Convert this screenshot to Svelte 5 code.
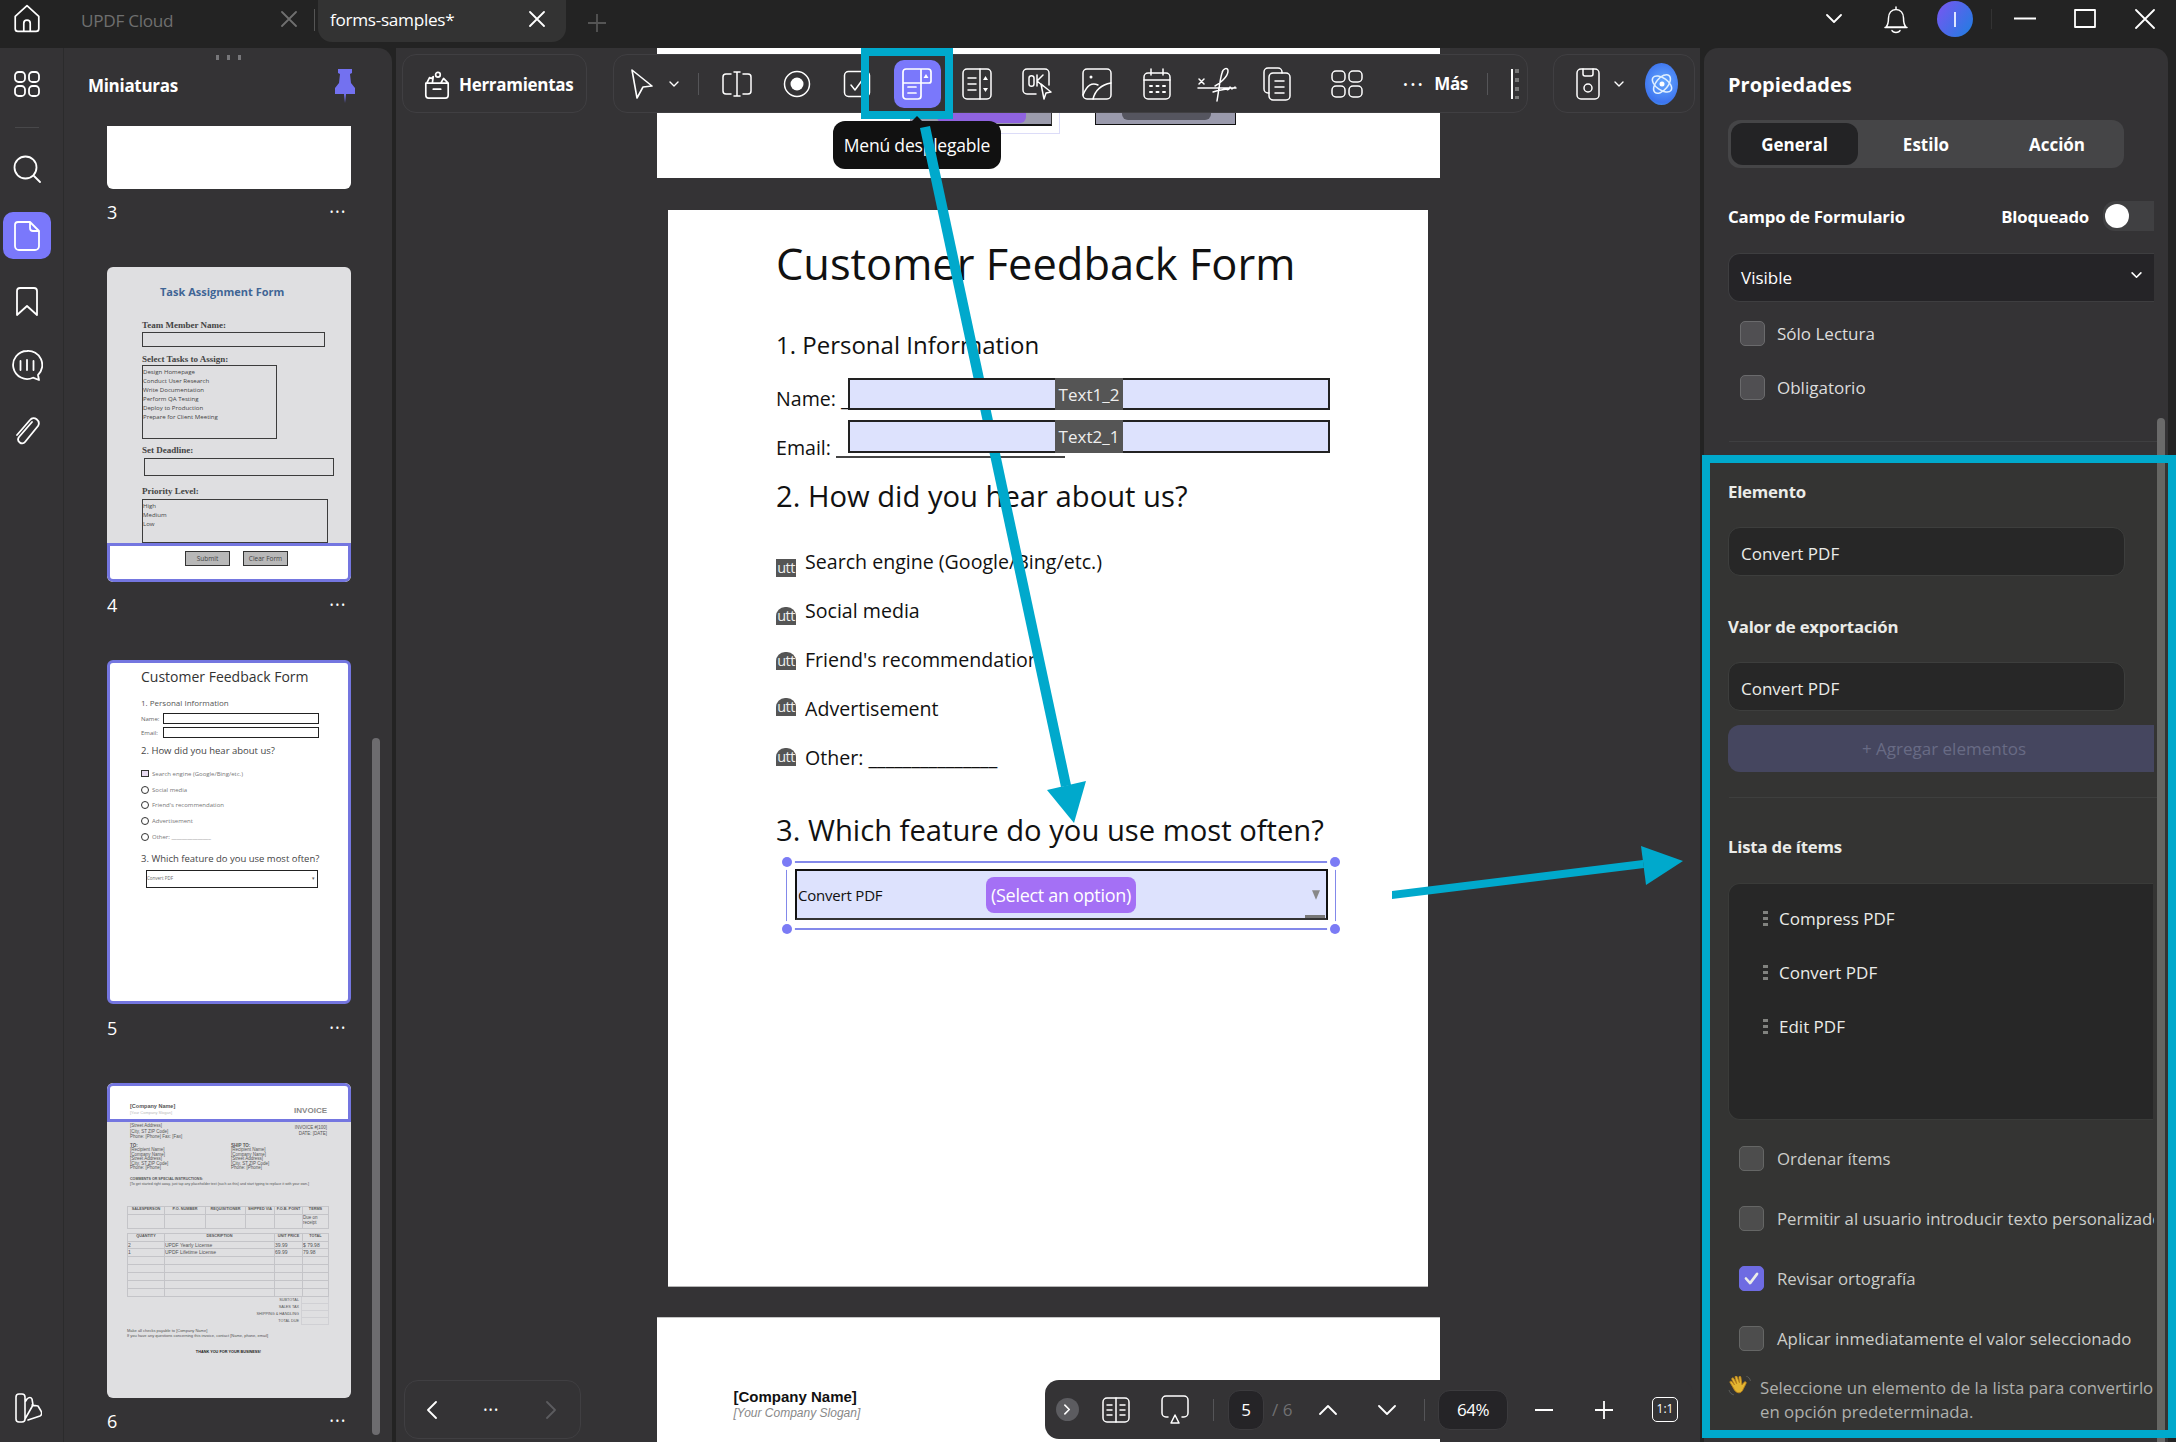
<script>
	const tasks = ['Design Homepage', 'Conduct User Research', 'Write Documentation', 'Perform QA Testing', 'Deploy to Production', 'Prepare for Client Meeting'];
	const priorities = ['High', 'Medium', 'Low'];
	const options = [
		{ text: 'Search engine (Google/Bing/etc.)', off: 6, round: false },
		{ text: 'Social media', off: 5, round: true },
		{ text: "Friend's recommendation", off: 1, round: true },
		{ text: 'Advertisement', off: -2, round: true },
		{ text: 'Other: _______________', off: -1, round: true }
	];
	const items = ['Compress PDF', 'Convert PDF', 'Edit PDF'];
	const lower = [
		{ text: 'Ordenar ítems', on: false },
		{ text: 'Permitir al usuario introducir texto personalizado', on: false },
		{ text: 'Revisar ortografía', on: true },
		{ text: 'Aplicar inmediatamente el valor seleccionado', on: false }
	];
	const invoiceHead = ['SALESPERSON', 'P.O. NUMBER', 'REQUISITIONER', 'SHIPPED VIA', 'F.O.B. POINT', 'TERMS'];
	const invoiceRows = [
		['2', 'UPDF Yearly License', '39.99', '$ 79.98'],
		['1', 'UPDF Lifetime License', '69.99', '79.98'],
		['', '', '', ''], ['', '', '', ''], ['', '', '', ''], ['', '', '', ''], ['', '', '', '']
	];
	const totals = ['SUBTOTAL', 'SALES TAX', 'SHIPPING & HANDLING', 'TOTAL DUE'];
</script>

<div class="app">
	<!-- barra de pestañas -->
	<header class="topbar">
		<svg class="home" viewBox="0 0 28 28" width="30" height="30"><path d="M3 12.5 14 2.5l11 10V24a2.5 2.5 0 0 1-2.5 2.5h-17A2.5 2.5 0 0 1 3 24zM11 26.500V19a3 3 0 0 1 6 0v7.500" /></svg>
		<div class="tab off">
			<span>UPDF Cloud</span>
			<svg viewBox="0 0 16 16" width="16" height="16"><path d="m1 1 14 14M15 1 1 15" /></svg>
		</div>
		<i class="tabsep"></i>
		<div class="tab on">
			<span>forms-samples*</span>
			<svg viewBox="0 0 16 16" width="16" height="16"><path d="m1 1 14 14M15 1 1 15" /></svg>
		</div>
		<svg class="plus" viewBox="0 0 18 18" width="18" height="18"><path d="M9 0v18M0 9h18" /></svg>

		<div class="winbtns">
			<svg viewBox="0 0 16 10" width="16" height="10"><path d="m1 1 7 7 7-7" /></svg>
			<svg class="bell" viewBox="0 0 24 30" width="24" height="30"><path d="M2 23c2-2 2.500-4 2.500-9 0-5 3-8.500 7.500-8.500s7.500 3.500 7.500 8.500c0 5 .5 7 2.500 9zM1 23.500h22M8 26.500c1 2.500 7 2.500 8 0M12 5.500V3" /></svg>
			<div class="avatar"><i></i></div>
			<i class="winsep"></i>
			<svg viewBox="0 0 22 4" width="22" height="4"><path d="M0 1.500h22" /></svg>
			<svg viewBox="0 0 22 20" width="22" height="20"><rect x="1" y="1" width="20" height="17" /></svg>
			<svg viewBox="0 0 20 20" width="20" height="20"><path d="m1 1 18 18M19 1 1 19" /></svg>
		</div>
	</header>

	<div class="body">
		<!-- barra lateral -->
		<nav class="rail">
			<svg viewBox="0 0 26 26" width="26" height="26" style="margin-top:23px"><rect x="1" y="1" width="10" height="10" rx="3.500" /><rect x="15" y="1" width="10" height="10" rx="3.500" /><rect x="1" y="15" width="10" height="10" rx="3.500" /><rect x="15" y="15" width="10" height="10" rx="3.500" /></svg>
			<i class="railsep"></i>
			<svg viewBox="0 0 28 28" width="28" height="28" style="margin-top:27px"><circle cx="12.500" cy="12.500" r="11" /><path d="m21 21 6 6" /></svg>
			<div class="railbtn">
				<svg viewBox="0 0 26 30" width="26" height="30"><path d="M4 1h12l9 9v15a4 4 0 0 1-4 4H5a4 4 0 0 1-4-4V4a3 3 0 0 1 3-3zM16 1v6a3 3 0 0 0 3 3h6" /></svg>
			</div>
			<svg viewBox="0 0 24 30" width="24" height="30" style="margin-top:28px"><path d="M5 1h14a3 3 0 0 1 3 3v24l-10-9-10 9V4a3 3 0 0 1 3-3z" /></svg>
			<svg viewBox="0 0 32 32" width="32" height="32" style="margin-top:33px"><path d="M16 1a14 14 0 1 0 6 26.700l6 2.300-1-5A14 14 0 0 0 16 1zM9.500 11v9M16 10v10M22.500 11v9" /></svg>
			<svg viewBox="0 0 28 32" width="28" height="32" style="margin-top:34px"><path d="M19 6 6 21c-3 4 3 9 6 5L25 10c3-5-4-11-8-6L4 19" /></svg>
			<svg class="skin" viewBox="0 0 28 30" width="28" height="30"><path d="M2 4a3 3 0 0 1 3-3h3a3 3 0 0 1 3 3v22a3 3 0 0 1-3 3H5a3 3 0 0 1-3-3zM11 9l2-3c2-2 4-2 5 0l1 6-8 14M14 27l12-4c2-1 2-3 1-5l-3-5-6-1" /></svg>
		</nav>

		<!-- miniaturas -->
		<aside class="thumbs">
			<div class="grip"><i></i><i></i><i></i></div>
			<div class="thumbhead">
				<span>Miniaturas</span>
				<svg viewBox="0 0 20 34" width="20" height="34"><path d="M3 0h14v4l-2 1 1 9 4 5v6H11l-1 9-1-9H0v-6l4-5 1-9-2-1z" /></svg>
			</div>

			<div class="thumblist">
				<div class="thumb t3"></div>
				<div class="thumbfoot"><span>3</span><b>•••</b></div>

				<div class="thumb t4">
					<div class="t4title">Task Assignment Form</div>
					<div class="t4label" style="margin-top:20px">Team Member Name:</div>
					<div class="t4box" style="width:183px;height:15px;margin-top:1px"></div>
					<div class="t4label" style="margin-top:7px">Select Tasks to Assign:</div>
					<div class="t4box t4list" style="width:135px;height:74px">
						{#each tasks as t}<div>{t}</div>{/each}
					</div>
					<div class="t4label" style="margin-top:6px">Set Deadline:</div>
					<div class="t4box" style="width:190px;height:18px;margin:2px 0 0 2px"></div>
					<div class="t4label" style="margin-top:10px">Priority Level:</div>
					<div class="t4box t4list" style="width:186px;height:44px;margin-top:2px">
						{#each priorities as t}<div>{t}</div>{/each}
					</div>
					<div class="t4strip">
						<span>Submit</span>
						<span>Clear Form</span>
					</div>
				</div>
				<div class="thumbfoot"><span>4</span><b>•••</b></div>

				<div class="thumb t5">
					<div class="t5h1">Customer Feedback Form</div>
					<div class="t5h3">1. Personal Information</div>
					<div class="t5row" style="margin-top:4px"><span>Name:</span><i></i></div>
					<div class="t5row" style="margin-top:3px"><span>Email:</span><i></i></div>
					<div class="t5h2" style="margin-top:5px">2. How did you hear about us?</div>
					<div class="t5opts">
						{#each options as o}
							<div><i class:round={o.round}></i>{o.text}</div>
						{/each}
					</div>
					<div class="t5h2" style="margin-top:7px">3. Which feature do you use most often?</div>
					<div class="t5sel">Convert PDF<b>▾</b></div>
				</div>
				<div class="thumbfoot f5"><span>5</span><b>•••</b></div>

				<div class="thumb t6">
					<div class="t6strip">
						<div class="t6co"><b>[Company Name]</b><small>[Your Company Slogan]</small></div>
						<div class="t6inv">INVOICE</div>
					</div>
					<div class="t6body">
						<div class="t6top">
							<div>[Street Address]<br />[City, ST ZIP Code]<br />Phone: [Phone]  Fax: [Fax]</div>
							<div class="r">INVOICE #[100]<br />DATE: [DATE]</div>
						</div>
						<div class="t6addr">
							<div><b>TO:</b><br />[Recipient Name]<br />[Company Name]<br />[Street Address]<br />[City, ST ZIP Code]<br />Phone: [Phone]</div>
							<div><b>SHIP TO:</b><br />[Recipient Name]<br />[Company Name]<br />[Street Address]<br />[City, ST ZIP Code]<br />Phone: [Phone]</div>
						</div>
						<div class="t6com"><b>COMMENTS OR SPECIAL INSTRUCTIONS:</b><br />[To get started right away, just tap any placeholder text (such as this) and start typing to replace it with your own.]</div>
						<div class="t6tab1">
							{#each invoiceHead as h}<b>{h}</b>{/each}
							{#each invoiceHead as h, i}<span>{i === 5 ? 'Due on receipt' : ''}</span>{/each}
						</div>
						<div class="t6tab2">
							<b>QUANTITY</b><b>DESCRIPTION</b><b>UNIT PRICE</b><b>TOTAL</b>
							{#each invoiceRows as r}
								{#each r as c}<span>{c}</span>{/each}
							{/each}
						</div>
						<div class="t6tot">
							{#each totals as t}<div><span>{t}</span><i></i></div>{/each}
						</div>
						<div class="t6note">Make all checks payable to [Company Name]<br />If you have any questions concerning this invoice, contact [Name, phone, email]</div>
						<div class="t6thx">THANK YOU FOR YOUR BUSINESS!</div>
					</div>
				</div>
				<div class="thumbfoot"><span>6</span><b>•••</b></div>
			</div>
			<i class="thumbscroll"></i>
		</aside>

		<!-- documento -->
		<main class="canvas">
			<section class="page pg1">
				<div class="frag a"><div class="purple"></div></div>
				<div class="frag b"><div class="darkbit"></div></div>
			</section>

			<section class="page pg2">
				<h1>Customer Feedback Form</h1>
				<h3>1. Personal Information</h3>
				<div class="frow r1">
					<span class="flabel">Name: _</span>
					<div class="field"><span class="ftag">Text1_2</span></div>
				</div>
				<div class="frow r2">
					<span class="flabel">Email:</span>
					<div class="field"><span class="ftag">Text2_1</span></div>
					<i class="uline"></i>
				</div>
				<h2 class="q2">2. How did you hear about us?</h2>
				<div class="opts">
					{#each options as o}
						<div class="opt">
							<span class="btnmark" class:round={o.round} style="top:{o.off}px">utt</span>
							<span>{o.text}</span>
						</div>
					{/each}
				</div>
				<h2 class="q3">3. Which feature do you use most often?</h2>
				<div class="selection">
					<i class="hd tl"></i><i class="hd tr"></i><i class="hd bl"></i><i class="hd br"></i>
					<div class="dropfield">
						<span class="dv">Convert PDF</span>
						<span class="badge">(Select an option)</span>
						<svg viewBox="0 0 10 12" width="8" height="10"><path d="M0 0h10L5 12z" /></svg>
						<i class="grab"></i>
					</div>
				</div>
			</section>

			<section class="page pg3">
				<div class="coname">[Company Name]</div>
				<div class="coslogan">[Your Company Slogan]</div>
			</section>

			<!-- barras flotantes -->
			<div class="floatbar herr">
				<svg viewBox="0 0 30 30" width="30" height="30"><path d="M3 13h24v13a3 3 0 0 1-3 3H6a3 3 0 0 1-3-3zM11 19.500h8M4 13 7 7l2 1 2-2-1 7M19 13l3-5 5 5" /><circle cx="16" cy="4" r="2.500" /></svg>
				<span>Herramientas</span>
			</div>

			<div class="floatbar tools">
				<svg class="w30" viewBox="0 0 24 30" width="24" height="30"><path d="M2 1 22 17l-9 1-6 11z" /></svg>
				<svg class="chev" viewBox="0 0 10 6" width="10" height="6"><path d="m1 1 4 4 4-4" /></svg>
				<i class="tsep s1"></i>
				<div class="toolrow">
					<div class="tool"><svg viewBox="0 0 32 26" width="32" height="26"><path d="M10 3H5a3 3 0 0 0-3 3v14a3 3 0 0 0 3 3h5M22 3h5a3 3 0 0 1 3 3v14a3 3 0 0 1-3 3h-5M13 1h6M16 1v24M13 25h6" /></svg></div>
					<div class="tool"><svg viewBox="0 0 28 28" width="28" height="28"><circle cx="14" cy="14" r="12.500" /><circle class="solid" cx="14" cy="14" r="6.500" /></svg></div>
					<div class="tool"><svg viewBox="0 0 28 28" width="28" height="28"><rect x="1.500" y="1.500" width="25" height="25" rx="4" /><path d="m8 15 4 5 8-11" /></svg></div>
					<div class="tool act"><svg viewBox="0 0 30 32" width="30" height="32"><path d="M4 1h22a3 3 0 0 1 3 3v9a2 2 0 0 1-2 2H19v13a3 3 0 0 1-3 3H4a3 3 0 0 1-3-3V4a3 3 0 0 1 3-3zM1 15h18M19 1v14M6 19h8M6 25h8" /><path class="solid" d="m24 6 2.500 4h-5z" /></svg></div>
					<div class="tool"><svg viewBox="0 0 30 32" width="30" height="32"><rect x="1" y="1" width="28" height="30" rx="4" /><path d="M18 1v30M6 10h8M6 16h8M6 22h8" /><path class="solid" d="m23.500 8 2.500 4h-5zM23.500 24 21 20h5z" /></svg></div>
					<div class="tool"><svg viewBox="0 0 32 34" width="32" height="34"><path d="M15 27H6a4 4 0 0 1-4-4V6a4 4 0 0 1 4-4h18a4 4 0 0 1 4 4v12" /><path d="M8 11v6c0 3 5 3 5 0v-6c0-3-5-3-5 0zM16 8v11M22 8l-6 6 6 5" /><path d="m20 17 10 8-5 1-2 6z" /></svg></div>
					<div class="tool"><svg viewBox="0 0 30 32" width="30" height="32"><rect x="1" y="1" width="28" height="30" rx="4" /><path d="M1 27c4-10 9-13 15-10M11 31c2-8 7-14 18-16" /><circle class="solid" cx="9" cy="9" r="1.500" /></svg></div>
					<div class="tool"><svg viewBox="0 0 30 32" width="30" height="32"><rect x="2" y="5" width="26" height="26" rx="4" /><path d="M2 12h26M9 1v6M21 1v6" /><path class="dash" d="M8 18h15M8 24h15" /></svg></div>
					<div class="tool"><svg viewBox="0 0 40 36" width="40" height="36"><path d="M1 22h38M2 13l5 5M7 13l-5 5M20 35c2-12 3-22 5-28 1-5 6-6 6-2 0 6-9 13-13 15M16 26c5-2 9-2 14-3 0 2 3 0 3-2l2 2 3-2" /></svg></div>
					<div class="tool"><svg viewBox="0 0 28 34" width="28" height="34"><path d="M6 26H5a4 4 0 0 1-4-4V5a4 4 0 0 1 4-4h10a4 4 0 0 1 4 4v1" /><rect x="6" y="6" width="21" height="27" rx="4" /><path d="M12 14h9M12 20h9M12 26h9" /></svg></div>
				</div>
				<svg class="gridic" viewBox="0 0 32 28" width="32" height="28"><rect x="1" y="1" width="13" height="11" rx="4" /><rect x="18" y="1" width="13" height="11" rx="4" /><rect x="1" y="16" width="13" height="11" rx="4" /><rect x="18" y="16" width="13" height="11" rx="4" /></svg>
				<b class="moredots">•••</b>
				<span class="more">Más</span>
				<i class="tsep s2"></i>
				<i class="cutbar"></i>
			</div>

			<div class="floatbar side">
				<svg viewBox="0 0 24 32" width="24" height="32"><rect x="1" y="1" width="22" height="30" rx="4" /><path d="M7 1v5a2 2 0 0 0 2 2h6a2 2 0 0 0 2-2V1" /><circle cx="12" cy="20" r="4" /></svg>
				<svg class="chev" viewBox="0 0 10 6" width="10" height="6"><path d="m1 1 4 4 4-4" /></svg>
				<div class="ai">
					<svg viewBox="0 0 30 30" width="30" height="30"><ellipse cx="15" cy="15" rx="11" ry="6" transform="rotate(35 15 15)" /><ellipse cx="15" cy="15" rx="11" ry="6" transform="rotate(-50 15 15)" /><circle class="solid" cx="15" cy="15" r="2.500" /></svg>
				</div>
			</div>

			<div class="floatbar prevnext">
				<svg viewBox="0 0 10 18" width="10" height="18"><path d="M9 1 1 9l8 8" /></svg>
				<b>•••</b>
				<svg class="dim" viewBox="0 0 10 18" width="10" height="18"><path d="m1 1 8 8-8 8" /></svg>
			</div>

			<div class="floatbar pager">
				<div class="collapse"><svg viewBox="0 0 8 12" width="7" height="11"><path d="m1 1 5 5-5 5" /></svg></div>
				<svg class="pb book" viewBox="0 0 28 26" width="28" height="26"><rect x="1" y="1" width="26" height="24" rx="4" /><path d="M14 1v24M5 8h5M5 13h5M5 18h5M18 8h5M18 13h5M18 18h5" /></svg>
				<svg class="pb present" viewBox="0 0 30 30" width="30" height="30"><path d="M8 22H6a4 4 0 0 1-4-4V5a4 4 0 0 1 4-4h18a4 4 0 0 1 4 4v13a4 4 0 0 1-4 4h-2" /><path d="m15 20 4 8h-8z" /></svg>
				<i class="tsep p1"></i>
				<div class="pageno">5</div>
				<span class="pagetot">/ 6</span>
				<svg class="pb up" viewBox="0 0 18 10" width="18" height="10"><path d="m1 9 8-8 8 8" /></svg>
				<svg class="pb down" viewBox="0 0 18 10" width="18" height="10"><path d="m1 1 8 8 8-8" /></svg>
				<i class="tsep p2"></i>
				<div class="zoomval">64%</div>
				<svg class="pb minus" viewBox="0 0 18 2" width="18" height="2"><path d="M0 1h18" /></svg>
				<svg class="pb plusic" viewBox="0 0 18 18" width="18" height="18"><path d="M9 0v18M0 9h18" /></svg>
				<div class="oneone">1:1</div>
			</div>
		</main>

		<!-- propiedades -->
		<aside class="props">
			<h4 class="ptitle">Propiedades</h4>
			<div class="ptabs">
				<span class="sel">General</span>
				<span class="es">Estilo</span>
				<span class="ac">Acción</span>
			</div>

			<div class="prow">
				<b>Campo de Formulario</b>
				<b class="blk">Bloqueado</b>
				<div class="toggle"><i></i></div>
			</div>
			<div class="pselect">
				<span>Visible</span>
				<svg viewBox="0 0 12 8" width="11" height="7"><path d="m1 1 5 5 5-5" /></svg>
			</div>
			<label class="chk first"><i></i>Sólo Lectura</label>
			<label class="chk second"><i></i>Obligatorio</label>
			<hr class="d1" />

			<div class="plabel l1">Elemento</div>
			<div class="pinput">Convert PDF</div>
			<div class="plabel l2">Valor de exportación</div>
			<div class="pinput">Convert PDF</div>
			<div class="addbtn">+ Agregar elementos</div>
			<hr class="d2" />

			<div class="plabel l3">Lista de ítems</div>
			<div class="itemlist">
				{#each items as it}
					<div class="itm"><i class="dots"><u></u><u></u><u></u></i>{it}</div>
				{/each}
			</div>
			<div class="lower">
				{#each lower as c}
					<label class="chk" class:on={c.on}>
						<i>{#if c.on}<svg viewBox="0 0 16 14" width="15" height="13"><path d="m2 7 4.500 5L14 2" /></svg>{/if}</i>{c.text}
					</label>
				{/each}
			</div>
			<div class="note">
				<svg viewBox="0 0 22 22" width="24" height="24"><path d="M5 13 2 8c-1-1 .5-2 1.500-1L6 10 3.500 5C3 3.800 4.500 3 5.200 4L8 9 6.500 3c-.3-1.300 1.300-1.700 1.800-.5L10.500 8l-.5-5c0-1.300 1.700-1.300 1.800 0l1 7 2-2.500c1-1 2.500 0 1.700 1.300l-2.500 5C12 19 7 18 5 13z" /><path class="lines" d="M17 2c1.500.5 3 2 3.500 4M1 15c.5 2 2 3.500 4 4" /></svg>
				<span>Seleccione un elemento de la lista para convertirlo<br />en opción predeterminada.</span>
			</div>
			<i class="propscroll"></i>
		</aside>
	</div>

	<!-- anotaciones -->
	<div class="mark markone"></div>
	<div class="tooltip">Menú desplegable</div>
	<div class="mark marktwo"></div>
	<svg class="arrows" viewBox="0 0 2176 1442" width="2176" height="1442">
		<polygon points="920,128 930,126 1071,785 1061,787" />
		<polygon points="1074,823 1047,790 1086,781" />
		<polygon points="1392,891 1643,860 1644,868 1392,899" />
		<polygon points="1683,861 1641,846 1646,885" />
	</svg>
</div>

<style>
	:global(body) {
		margin: 0;
		background: #232323;
	}

	.app {
		width: 2176px;
		height: 1442px;
		position: relative;
		overflow: hidden;
		background: #232323;
		color: #fff;
		font-family: "Open Sans", "Noto Sans", sans-serif;
		display: flex;
		flex-direction: column;
	}

	svg {
		fill: none;
		stroke: #fff;
		stroke-width: 1.8;
		stroke-linecap: round;
		stroke-linejoin: round;
		flex: none;
	}
	svg .solid {
		fill: #fff;
		stroke: none;
	}

	/* barra superior */
	.topbar {
		height: 48px;
		flex: none;
		display: flex;
		align-items: flex-start;
		padding-left: 12px;
		box-sizing: border-box;
	}
	.home {
		margin-top: 3px;
		stroke-width: 1.6;
	}
	.tab {
		display: flex;
		align-items: center;
		justify-content: space-between;
		height: 40px;
		box-sizing: border-box;
		font-size: 17.200px;
		letter-spacing: -0.3px;
	}
	.tab.off {
		width: 211px;
		margin-left: 39px;
		color: #6f6f6f;
	}
	.tab.off svg {
		stroke: #6f6f6f;
		margin-top: -2px;
		margin-right: -5px;
	}
	.tabsep {
		width: 1px;
		height: 22px;
		background: #555;
		margin: 9px 0 0 22px;
	}
	.tab.on {
		width: 248px;
		height: 42px;
		margin-left: 3px;
		padding: 0 21px 0 12px;
		background: #333333;
		border-radius: 0 0 14px 14px;
	}
	.tab.on span {
		margin-top: -3px;
	}
	.tab.on svg {
		margin-top: -4px;
	}
	.plus {
		margin: 14px 0 0 22px;
		stroke: #555;
	}
	.winbtns {
		margin-left: auto;
		display: flex;
		align-items: center;
		height: 38px;
		padding-right: 21px;
	}
	.winbtns .bell {
		margin-left: 42px;
		stroke-width: 1.5;
	}
	.avatar {
		width: 36px;
		height: 36px;
		border-radius: 50%;
		background: linear-gradient(125deg, #7a55f2, #1d7fe0);
		margin-left: 29px;
		display: flex;
		align-items: center;
		justify-content: center;
	}
	.avatar i {
		width: 2px;
		height: 15px;
		background: #dfe6ff;
	}
	.winsep {
		width: 1px;
		height: 20px;
		background: #333;
		margin-left: 18px;
	}
	.winbtns svg:nth-of-type(3) {
		margin-left: 22px;
	}
	.winbtns svg:nth-of-type(4) {
		margin-left: 38px;
	}
	.winbtns svg:nth-of-type(5) {
		margin-left: 39px;
	}

	.body {
		flex: 1;
		display: flex;
		min-height: 0;
	}

	/* barra lateral */
	.rail {
		flex: none;
		background: #343335;
		border-right: 1px solid #2b2b2c;
		display: flex;
		flex-direction: column;
		align-items: center;
		padding-right: 9px;
		box-sizing: border-box;
		width: 64px;
		position: relative;
	}
	.railsep {
		width: 24px;
		height: 1px;
		background: #48484a;
		margin-top: 30px;
	}
	.railbtn {
		width: 48px;
		height: 47px;
		margin-top: 29px;
		background: #7a78fb;
		border-radius: 10px;
		display: flex;
		align-items: center;
		justify-content: center;
	}
	.skin {
		margin-top: auto;
		margin-bottom: 19px;
		margin-left: 2px;
		stroke-width: 1.6;
	}

	/* miniaturas */
	.thumbs {
		width: 328px;
		flex: none;
		background: #343335;
		border-radius: 0 14px 0 0;
		position: relative;
		overflow: hidden;
	}
	.grip {
		display: flex;
		justify-content: center;
		gap: 8px;
		padding-top: 7px;
		height: 5px;
	}
	.grip i {
		width: 3px;
		height: 5px;
		background: #77777a;
	}
	.thumbhead {
		display: flex;
		justify-content: space-between;
		align-items: center;
		margin-top: 7px;
		padding: 0 37px 0 24px;
		height: 36px;
		font-size: 17px;
		font-weight: 700;
		letter-spacing: -0.3px;
	}
	.thumbhead svg {
		fill: #7371f0;
		stroke: none;
		margin-top: 2px;
	}
	.thumblist {
		margin: 23px 0 0 43px;
		width: 244px;
	}
	.thumb {
		width: 244px;
		box-sizing: border-box;
		border-radius: 6px;
		overflow: hidden;
		position: relative;
		color: #333;
	}
	.thumbfoot {
		height: 78px;
		display: flex;
		justify-content: space-between;
		padding: 10px 4px 0 0;
		box-sizing: border-box;
		font-size: 18px;
		line-height: 26px;
	}
	.thumbfoot b {
		font-size: 10px;
		letter-spacing: 2px;
		font-weight: 400;
	}
	.thumbfoot.f5 {
		height: 79px;
		padding-top: 11px;
	}
	.t3 {
		height: 63px;
		background: #fff;
		border-radius: 0 0 6px 6px;
	}
	.t4 {
		height: 315px;
		background: #dfdfe1;
		padding: 17px 0 0 35px;
		font-family: "Liberation Serif", serif;
	}
	.t4title {
		font: 700 11px/16px "Open Sans", sans-serif;
		color: #3f6595;
		margin-left: 18px;
	}
	.t4label {
		font-size: 9px;
		font-weight: 700;
		line-height: 11px;
		color: #444;
	}
	.t4box {
		border: 1.5px solid #3c3c3c;
		box-sizing: border-box;
	}
	.t4list {
		font: 6.100px/9.100px "Open Sans", sans-serif;
		color: #444;
		padding-top: 1px;
	}
	.t4strip {
		position: absolute;
		left: 0;
		right: 0;
		bottom: 0;
		height: 39px;
		box-sizing: border-box;
		background: #fff;
		border: 3px solid #7476e0;
		border-radius: 0 0 6px 6px;
		display: flex;
		justify-content: center;
		gap: 13px;
		padding: 5px 0 0 15px;
		font: 6.500px/13px "Open Sans", sans-serif;
	}
	.t4strip span {
		width: 45px;
		height: 15px;
		text-align: center;
		box-sizing: border-box;
		background: #b8b8b8;
		border: 1px solid #333;
		color: #444;
	}
	.t5 {
		height: 344px;
		background: #fff;
		border: 3px solid #7476e0;
		padding: 4px 0 0 31px;
	}
	.t5h1 {
		font-size: 14px;
		line-height: 20px;
	}
	.t5h3 {
		font-size: 8px;
		line-height: 12px;
		margin-top: 10px;
		color: #555;
	}
	.t5h2 {
		font-size: 9.500px;
		line-height: 15px;
		color: #444;
		white-space: nowrap;
	}
	.t5row {
		display: flex;
		align-items: flex-end;
		height: 11px;
		font-size: 6px;
		line-height: 9px;
		color: #666;
	}
	.t5row span {
		width: 22px;
	}
	.t5row i {
		width: 156px;
		height: 11px;
		box-sizing: border-box;
		border: 1.5px solid #222;
		background: #fff;
	}
	.t5opts {
		margin-top: 8px;
		font-size: 6px;
		color: #777;
	}
	.t5opts div {
		height: 15.700px;
		display: flex;
		align-items: center;
		gap: 3px;
	}
	.t5opts i {
		width: 6px;
		height: 5px;
		border: 1.500px solid #333;
		background: #e9dcf2;
	}
	.t5opts i.round {
		border-radius: 50%;
		background: #fff;
		height: 6px;
	}
	.t5sel {
		margin: 4px 0 0 5px;
		width: 172px;
		height: 18px;
		box-sizing: border-box;
		border: 1.5px solid #222;
		font-size: 4.500px;
		line-height: 15px;
		color: #666;
		display: flex;
		justify-content: space-between;
		padding-right: 2px;
	}
	.t5sel b {
		font-weight: 400;
	}
	.t6 {
		height: 315px;
		background: #dfdfe1;
		font: 4.500px/5.500px "Liberation Sans", sans-serif;
		color: #555;
	}
	.t6strip {
		height: 39px;
		background: #fff;
		box-sizing: border-box;
		border: 3px solid #7476e0;
		border-radius: 6px 6px 0 0;
		display: flex;
		justify-content: space-between;
		padding: 18px 21px 0 20px;
	}
	.t6co b {
		display: block;
		font-size: 5.500px;
	}
	.t6co small {
		font-size: 4px;
		color: #bbb;
	}
	.t6inv {
		font-size: 8px;
		font-weight: 700;
		line-height: 12px;
		color: #888;
		margin-top: 1px;
	}
	.t6body {
		padding: 1px 24px 0 23px;
	}
	.t6top {
		display: flex;
		justify-content: space-between;
	}
	.t6top .r {
		text-align: right;
		margin-top: 2px;
	}
	.t6addr {
		display: grid;
		grid-template-columns: 101px 1fr;
		margin-top: 4px;
		line-height: 4.500px;
	}
	.t6addr div {
		line-height: 4.500px;
	}
	.t6com {
		margin-top: 6px;
		font-size: 3.600px;
		white-space: nowrap;
	}
	.t6tab1,
	.t6tab2 {
		display: grid;
		margin-left: -3px;
		margin-right: -2px;
		border-top: 1px solid #c4c4c8;
		border-left: 1px solid #c4c4c8;
	}
	.t6tab1 {
		margin-top: 18px;
		grid-template-columns: 37px 41px 40px 29px 28px 1fr;
	}
	.t6tab2 {
		margin-top: 4px;
		grid-template-columns: 37px 110px 28px 1fr;
	}
	.t6tab1 b,
	.t6tab2 b {
		font-size: 3.800px;
		text-align: center;
		height: 7px;
	}
	.t6tab1 b,
	.t6tab1 span,
	.t6tab2 b,
	.t6tab2 span {
		border-right: 1px solid #c4c4c8;
		border-bottom: 1px solid #c4c4c8;
		overflow: hidden;
	}
	.t6tab1 span {
		height: 13px;
	}
	.t6tab2 span {
		height: 6.900px;
		line-height: 6px;
		font-size: 5px;
	}
	.t6tot {
		margin: 0 -2px 0 0;
	}
	.t6tot div {
		display: flex;
		justify-content: flex-end;
		gap: 2px;
		height: 7px;
		line-height: 7px;
		font-size: 3.800px;
	}
	.t6tot i {
		width: 26px;
		border: 1px solid #d0d0d4;
		border-top: 0;
	}
	.t6note {
		margin: 3px 0 0 -3px;
		font-size: 4px;
	}
	.t6thx {
		margin-top: 11px;
		text-align: center;
		font-size: 3.800px;
		font-weight: 700;
		color: #222;
	}
	.thumbscroll {
		position: absolute;
		left: 308px;
		top: 690px;
		width: 8px;
		height: 697px;
		border-radius: 4px;
		background: #6d6c6f;
	}

	/* documento */
	.canvas {
		width: 1304px;
		margin-left: 4px;
		flex: none;
		background: #343335;
		position: relative;
		overflow: hidden;
		display: flex;
		flex-direction: column;
		align-items: center;
	}
	.page {
		background: #fff;
		flex: none;
		color: #111;
		box-sizing: border-box;
	}
	.pg1 {
		width: 783px;
		height: 130px;
		display: flex;
		align-items: flex-start;
		padding-top: 30px;
	}
	.frag {
		position: relative;
		box-sizing: border-box;
		flex: none;
	}
	.frag.a {
		width: 156px;
		height: 56px;
		margin-left: 247px;
		border-right: 1px solid #dcdcf8;
		border-bottom: 1px solid #dcdcf8;
		padding-top: 0;
	}
	.frag.a::before {
		content: "";
		position: absolute;
		left: 6px;
		top: 0;
		width: 142px;
		height: 48px;
		background: #9b9bac;
		border-bottom: 2px solid #111;
		border-right: 1px solid #333;
		box-sizing: border-box;
	}
	.purple {
		position: absolute;
		left: 33px;
		top: 0;
		width: 89px;
		height: 45px;
		background: #8f63e0;
		border-radius: 0 0 6px 6px;
	}
	.frag.b {
		width: 141px;
		height: 47px;
		margin-left: 35px;
		background: #9a9aac;
		border: 1.5px solid #111;
		border-top: 0;
	}
	.darkbit {
		position: absolute;
		left: 26px;
		top: 0;
		width: 89px;
		height: 42px;
		background: #55555f;
		border-radius: 0 0 6px 6px;
	}

	.pg2 {
		width: 760px;
		height: 1077px;
		margin-top: 32px;
		padding: 24px 0 0 108px;
		border-bottom: 1px solid #b5b5b5;
	}
	h1,
	h2,
	h3 {
		margin: 0;
		font-weight: 400;
		white-space: nowrap;
	}
	h1 {
		font-size: 43.400px;
		line-height: 60px;
	}
	h3 {
		margin-top: 33px;
		font-size: 24px;
		line-height: 36px;
	}
	h2 {
		font-size: 29.200px;
		line-height: 40px;
	}
	.frow {
		display: flex;
		position: relative;
		font-size: 19.600px;
	}
	.frow.r1 {
		margin-top: 15px;
		height: 32px;
	}
	.frow.r2 {
		margin-top: 10px;
		height: 33px;
	}
	.flabel {
		width: 72px;
		flex: none;
		line-height: 42px;
		white-space: nowrap;
	}
	.frow.r2 .flabel {
		line-height: 56px;
	}
	.field {
		width: 482px;
		box-sizing: border-box;
		background: #dde2fd;
		border: 2px solid #222;
		display: flex;
		position: relative;
		z-index: 1;
		padding-left: 205px;
	}
	.ftag {
		width: 68px;
		flex: none;
		margin: -2px 0;
		background: #555;
		color: #eee;
		text-align: center;
		font-size: 17px;
		line-height: 34px;
	}
	.uline {
		position: absolute;
		left: 60px;
		top: 36px;
		width: 229px;
		height: 1.500px;
		background: #444;
	}
	.q2 {
		margin-top: 23px;
	}
	.opts {
		margin-top: 31px;
	}
	.opt {
		height: 49px;
		display: flex;
		gap: 9px;
		font-size: 19.600px;
		line-height: 30px;
		white-space: nowrap;
	}
	.btnmark {
		position: relative;
		width: 20px;
		height: 18px;
		margin-top: 6px;
		background: #555;
		color: #eee;
		font-size: 14.500px;
		line-height: 18px;
		text-align: center;
		letter-spacing: -0.5px;
		flex: none;
	}
	.btnmark.round {
		border-radius: 9px 9px 0 0;
	}
	.q3 {
		margin-top: 18px;
	}
	.selection {
		position: relative;
		margin: 11px 0 0 10px;
		width: 550px;
		height: 69px;
		box-sizing: border-box;
		padding: 8px 0 0 8px;
		border: solid #8389ea;
		border-width: 2.500px 1px;
	}
	.hd {
		position: absolute;
		width: 10px;
		height: 10px;
		border-radius: 50%;
		background: #7b7bf5;
		box-shadow: 0 0 0 3px #fff;
	}
	.tl { left: -5px; top: -6px; }
	.tr { right: -5px; top: -6px; }
	.bl { left: -5px; bottom: -6px; }
	.br { right: -5px; bottom: -6px; }
	.dropfield {
		width: 533px;
		height: 51px;
		margin-top: -2.500px;
		box-sizing: border-box;
		position: relative;
		background: #dde2fd;
		border: 2px solid #111;
		border-bottom-color: #333;
		display: flex;
		align-items: center;
		padding: 2px 0 0 1px;
		font-size: 15px;
		color: #111;
		white-space: nowrap;
	}
	.dv {
		width: 188px;
		flex: none;
		letter-spacing: -0.2px;
	}
	.badge {
		width: 150px;
		flex: none;
		height: 36px;
		line-height: 37px;
		text-align: center;
		background: #a470f5;
		color: #fff;
		font-size: 18px;
		letter-spacing: -0.3px;
		border-radius: 8px;
	}
	.dropfield svg {
		fill: #888;
		stroke: none;
		margin-left: auto;
		margin-right: 6px;
	}
	.grab {
		position: absolute;
		right: 1px;
		bottom: 0;
		width: 20px;
		height: 3px;
		background: #777;
	}
	.pg3 {
		width: 783px;
		height: 200px;
		margin-top: 30px;
		padding: 70px 0 0 77px;
		border-top: 1px solid #c5c5c5;
		font-family: "Liberation Sans", sans-serif;
	}
	.coname {
		font-size: 15px;
		font-weight: 700;
		line-height: 18px;
	}
	.coslogan {
		font-size: 12px;
		font-style: italic;
		line-height: 15px;
		color: #888;
	}

	/* barras flotantes */
	.floatbar {
		position: absolute;
		box-sizing: border-box;
		height: 59px;
		background: #343335;
		border: 1px solid #403f42;
		border-radius: 14px;
		display: flex;
		align-items: center;
	}
	.herr {
		left: 6px;
		top: 6px;
		width: 185px;
		padding: 2px 0 0 20px;
		gap: 8px;
		font-size: 17px;
		font-weight: 700;
		letter-spacing: -0.3px;
	}
	.herr svg {
		width: 28px;
		height: 28px;
	}
	.tools {
		left: 217px;
		top: 6px;
		width: 915px;
		padding-left: 13px;
		overflow: hidden;
	}
	.w30 {
		width: 24px;
		margin-left: 3px;
		stroke-width: 1.6;
	}
	.chev {
		margin-left: 15px;
		stroke-width: 1.4;
	}
	.tsep {
		width: 1px;
		height: 22px;
		background: #555558;
		flex: none;
	}
	.tsep.s1 {
		margin-left: 19px;
	}
	.toolrow {
		display: flex;
		margin-left: 8px;
	}
	.tool {
		width: 60px;
		height: 48px;
		display: flex;
		align-items: center;
		justify-content: center;
		flex: none;
	}
	.tool svg {
		stroke-width: 1.500;
	}
	.tool.act svg {
		stroke-width: 1.700;
	}
	.tool.act {
		background: #7a78fb;
		width: 47px;
		margin: 0 6.500px;
		border-radius: 10px;
	}
	.dash {
		stroke-dasharray: 2 4.500;
		stroke-width: 2;
	}
	.gridic {
		margin-left: 24px;
		stroke-width: 1.500;
	}
	.moredots {
		margin-left: 40px;
		font-size: 13px;
		letter-spacing: 2.500px;
		font-weight: 400;
	}
	.more {
		margin-left: 9px;
		font-size: 17px;
		font-weight: 700;
		letter-spacing: -0.3px;
	}
	.tsep.s2 {
		margin-left: 19px;
	}
	.cutbar {
		width: 2px;
		height: 30px;
		margin-left: 23px;
		background: #fff;
		flex: none;
	}
	.cutbar::after {
		content: "";
		display: block;
		width: 4px;
		height: 30px;
		margin-left: 4px;
		background: repeating-linear-gradient(#777 0 4px, transparent 4px 9px);
	}
	.side {
		left: 1157px;
		top: 6px;
		width: 142px;
		padding-left: 22px;
	}
	.side svg:first-child {
		stroke-width: 1.500;
	}
	.side .chev {
		margin-left: 14px;
	}
	.ai {
		width: 33px;
		height: 42px;
		margin-left: 21px;
		border-radius: 50%;
		background: radial-gradient(circle at 55% 45%, #66a8ff, #3d74ef 70%, #4bb0e0);
		display: flex;
		align-items: center;
		justify-content: center;
	}
	.ai svg {
		stroke: #dfefff;
		stroke-width: 1.500;
	}
	.prevnext {
		left: 8px;
		top: 1332px;
		width: 177px;
		justify-content: space-between;
		padding: 0 24px 0 22px;
	}
	.prevnext b {
		font-size: 10px;
		font-weight: 400;
		letter-spacing: 1.500px;
	}
	.prevnext .dim {
		stroke: #5c5c5f;
	}
	.pager {
		left: 649px;
		top: 1332px;
		width: 648px;
		border: 0;
		border-radius: 14px 14px 0 14px;
		font-size: 17px;
	}
	.collapse {
		width: 23px;
		height: 23px;
		border-radius: 50%;
		background: #5c5c60;
		margin-left: 11px;
		display: flex;
		align-items: center;
		justify-content: center;
		flex: none;
	}
	.book {
		margin-left: 23px;
		stroke-width: 1.500;
	}
	.present {
		margin-left: 30px;
		stroke-width: 1.500;
	}
	.tsep.p1 {
		margin-left: 23px;
	}
	.pageno {
		width: 36px;
		height: 40px;
		margin-left: 14px;
		border-radius: 12px;
		background: #252427;
		border: 1px solid #3c3b3e;
		box-sizing: border-box;
		text-align: center;
		line-height: 38px;
		flex: none;
	}
	.pagetot {
		margin-left: 8px;
		width: 30px;
		color: #707072;
		flex: none;
		white-space: nowrap;
	}
	.up {
		margin-left: 17px;
	}
	.down {
		margin-left: 41px;
	}
	.tsep.p2 {
		margin-left: 28px;
	}
	.zoomval {
		width: 70px;
		height: 40px;
		margin-left: 13px;
		border-radius: 12px;
		background: #252427;
		border: 1px solid #3c3b3e;
		box-sizing: border-box;
		text-align: center;
		line-height: 38px;
		flex: none;
		letter-spacing: -0.5px;
	}
	.minus {
		margin-left: 27px;
	}
	.plusic {
		margin-left: 42px;
	}
	.oneone {
		width: 26px;
		height: 25px;
		margin-left: 39px;
		box-sizing: border-box;
		border: 1.500px solid #fff;
		border-radius: 5px;
		font-size: 12px;
		text-align: center;
		line-height: 21px;
		flex: none;
	}

	/* propiedades */
	.props {
		width: 464px;
		flex: none;
		margin-left: 4px;
		background: #343335;
		border-radius: 14px 14px 0 0;
		box-sizing: border-box;
		padding-left: 25px;
		position: relative;
		overflow: hidden;
		font-size: 17px;
	}
	.ptitle {
		margin: 25px 0 -1px -1px;
		font-size: 20px;
		line-height: 24px;
		font-weight: 700;
	}
	.ptabs {
		margin-top: 24px;
		margin-left: -1px;
		width: 396px;
		height: 48px;
		box-sizing: border-box;
		background: #454547;
		border-radius: 12px;
		padding: 3px;
		display: flex;
		font-size: 17px;
		font-weight: 700;
	}
	.ptabs span {
		display: flex;
		align-items: center;
		justify-content: center;
		border-radius: 12px;
	}
	.ptabs .sel {
		width: 127px;
		background: #232325;
	}
	.ptabs .es {
		width: 136px;
	}
	.ptabs .ac {
		width: 126px;
	}
	.prow {
		margin-top: 33px;
		margin-left: -1px;
		height: 30px;
		display: flex;
		align-items: center;
		font-size: 16.800px;
		letter-spacing: -0.2px;
	}
	.blk {
		margin-left: auto;
	}
	.toggle {
		width: 51px;
		height: 30px;
		margin: 0 14px 0 14px;
		background: #404042;
		border-radius: 12px 0 0 12px;
		display: flex;
		align-items: center;
		padding-left: 2px;
		box-sizing: border-box;
	}
	.toggle i {
		width: 24px;
		height: 24px;
		border-radius: 50%;
		background: #fff;
	}
	.pselect {
		margin-top: 22px;
		margin-left: -1px;
		width: 426px;
		height: 49px;
		box-sizing: border-box;
		background: #252427;
		border: 1px solid #3e3e40;
		border-right: 0;
		border-radius: 12px 0 0 12px;
		display: flex;
		align-items: center;
		justify-content: space-between;
		padding: 0 12px 0 12px;
	}
	.pselect svg {
		margin-top: -4px;
	}
	.chk {
		display: flex;
		align-items: center;
		gap: 12px;
		height: 25px;
		margin-left: 11px;
		color: #ddd;
		white-space: nowrap;
	}
	.chk i {
		width: 25px;
		height: 25px;
		flex: none;
		box-sizing: border-box;
		background: #504f52;
		border: 1.500px solid #6a6a6c;
		border-radius: 5px;
		display: flex;
		align-items: center;
		justify-content: center;
	}
	.chk.on i {
		background: #7470f8;
		border-color: #7470f8;
	}
	.chk.on svg {
		stroke-width: 2.800;
	}
	.chk.first {
		margin-top: 19px;
	}
	.chk.second {
		margin-top: 29px;
	}
	hr {
		border: 0;
		height: 1px;
		background: #3f3f41;
		width: 429px;
		margin: 0;
	}
	hr.d1 {
		margin-top: 41px;
	}
	hr.d2 {
		margin-top: 25px;
	}
	.plabel {
		font-weight: 700;
		font-size: 16.800px;
		line-height: 24px;
		letter-spacing: -0.2px;
		margin-left: -1px;
	}
	.l1 {
		margin-top: 38px;
	}
	.l2 {
		margin-top: 39px;
	}
	.l3 {
		margin-top: 37px;
	}
	.pinput {
		margin-top: 23px;
		margin-left: -1px;
		width: 397px;
		height: 49px;
		box-sizing: border-box;
		background: #252427;
		border: 1px solid #3e3e40;
		border-radius: 12px;
		padding-left: 12px;
		line-height: 51px;
	}
	.addbtn {
		margin-top: 14px;
		margin-left: -1px;
		width: 426px;
		height: 47px;
		line-height: 48px;
		background: #474766;
		color: #6e7090;
		border-radius: 12px 0 0 12px;
		text-align: center;
		padding-left: 6px;
		box-sizing: border-box;
	}
	.itemlist {
		margin-top: 24px;
		margin-left: -1px;
		width: 425px;
		height: 237px;
		box-sizing: border-box;
		background: #252427;
		border: 1px solid #3a3a3c;
		border-right: 0;
		border-radius: 12px 0 0 12px;
		padding-top: 7px;
	}
	.itm {
		display: flex;
		align-items: center;
		height: 54px;
		padding-left: 34px;
		gap: 11px;
	}
	.dots {
		display: flex;
		flex-direction: column;
		gap: 3px;
		text-decoration: none;
	}
	.dots u {
		width: 5px;
		height: 3px;
		background: #8a8a8a;
	}
	.lower {
		margin-top: 26px;
		margin-left: -1px;
		width: 426px;
		overflow: hidden;
		font-size: 16.800px;
	}
	.lower .chk {
		height: 24px;
		margin-bottom: 36px;
		gap: 13px;
	}
	.note {
		margin-top: -10px;
		margin-left: -1px;
		width: 426px;
		overflow: hidden;
		display: flex;
		gap: 8px;
		white-space: nowrap;
		line-height: 24px;
		font-size: 16.800px;
		color: #bdbdbd;
	}
	.note svg {
		margin-top: -2px;
		fill: #f6c233;
		stroke: #c8891a;
		stroke-width: 0.8;
	}
	.note .lines {
		fill: none;
		stroke: #666;
	}
	.propscroll {
		position: absolute;
		left: 453px;
		top: 370px;
		width: 8px;
		height: 1024px;
		background: #6a6a6a;
		border-radius: 4px 4px 0 0;
	}

	/* anotaciones */
	.mark {
		position: absolute;
		box-sizing: border-box;
		border: 8px solid #00a9cc;
		pointer-events: none;
	}
	.markone {
		left: 861px;
		top: 48px;
		width: 92px;
		height: 71px;
	}
	.marktwo {
		left: 1702px;
		top: 455px;
		width: 474px;
		height: 983px;
		border-right-width: 8px;
		background: rgba(56, 66, 44, 0.1);
	}
	.tooltip {
		position: absolute;
		left: 833px;
		top: 121px;
		width: 168px;
		height: 48px;
		background: #111;
		border-radius: 12px;
		font-size: 17.500px;
		line-height: 49px;
		text-align: center;
		letter-spacing: -0.2px;
		white-space: nowrap;
	}
	.tooltip::before {
		content: "";
		position: absolute;
		left: 77px;
		top: -5px;
		border: 7px solid transparent;
		border-top: 0;
		border-bottom-color: #111;
	}
	.arrows {
		position: absolute;
		left: 0;
		top: 0;
		pointer-events: none;
		fill: #00a9cc;
		stroke: none;
	}
</style>
